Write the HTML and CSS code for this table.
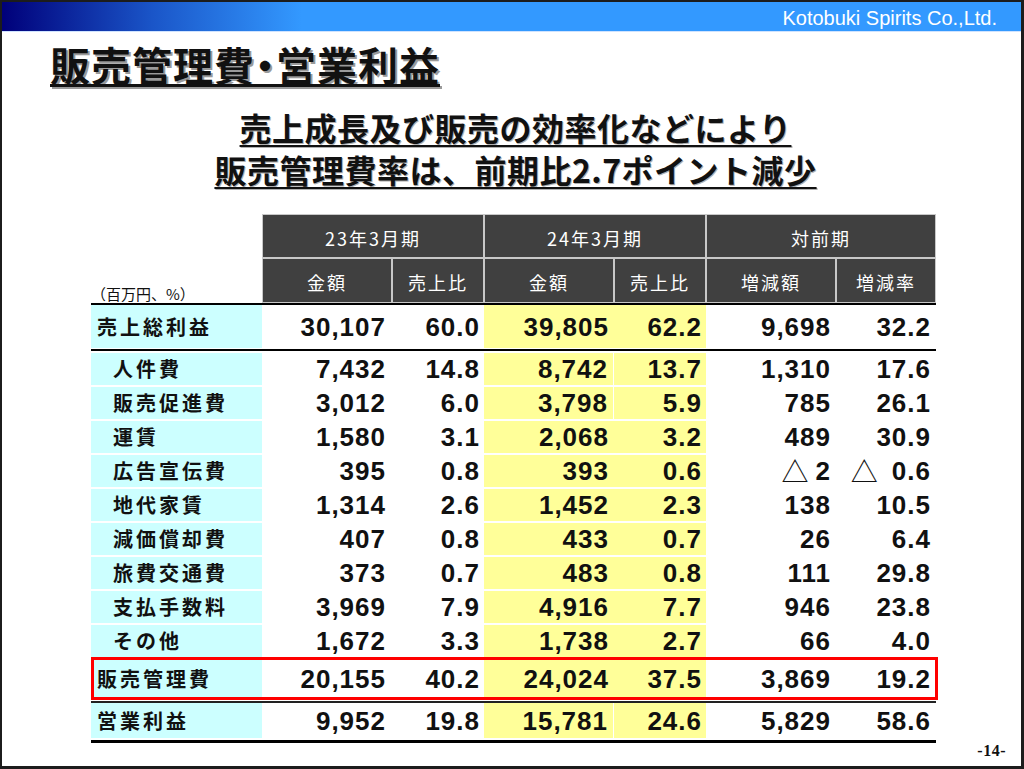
FILE: index.html
```html
<!DOCTYPE html>
<html lang="ja">
<head>
<meta charset="utf-8">
<title>販売管理費・営業利益</title>
<link rel="stylesheet" href="styles.css">
</head>
<body>
<div class="slide">
  <header class="band"><span class="company">Kotobuki Spirits Co.,Ltd.</span></header>
  <h1 class="title">販売管理費<span class="dot">・</span>営業利益</h1>
  <div class="lead">
    <p class="lead-line">売上成長及び販売の効率化などにより</p>
    <p class="lead-line">販売管理費率は、前期比2.7ポイント減少</p>
  </div>
  <div class="table">
    <div class="thead">
      <div class="hblank"></div>
      <div class="hg">23年3月期</div>
      <div class="hg">24年3月期</div>
      <div class="hg">対前期</div>
      <div class="unit">（百万円、%）</div>
      <div class="hc">金額</div>
      <div class="hc">売上比</div>
      <div class="hc">金額</div>
      <div class="hc">売上比</div>
      <div class="hc">増減額</div>
      <div class="hc">増減率</div>
    </div>
    <div class="row gross">
      <div class="lbl cy">売上総利益</div>
      <div class="num">30,107</div><div class="num">60.0</div>
      <div class="num ye">39,805</div><div class="num ye">62.2</div>
      <div class="num">9,698</div><div class="num">32.2</div>
    </div>
    <div class="row detail split">
      <div class="lbl sub cy">人件費</div>
      <div class="num">7,432</div><div class="num">14.8</div>
      <div class="num ye">8,742</div><div class="num ye">13.7</div>
      <div class="num">1,310</div><div class="num">17.6</div>
    </div>
    <div class="row detail split">
      <div class="lbl sub cy">販売促進費</div>
      <div class="num">3,012</div><div class="num">6.0</div>
      <div class="num ye">3,798</div><div class="num ye">5.9</div>
      <div class="num">785</div><div class="num">26.1</div>
    </div>
    <div class="row detail">
      <div class="lbl sub cy">運賃</div>
      <div class="num">1,580</div><div class="num">3.1</div>
      <div class="num ye">2,068</div><div class="num ye">3.2</div>
      <div class="num">489</div><div class="num">30.9</div>
    </div>
    <div class="row detail">
      <div class="lbl sub cy">広告宣伝費</div>
      <div class="num">395</div><div class="num">0.8</div>
      <div class="num ye">393</div><div class="num ye">0.6</div>
      <div class="num"><span class="tri">△</span><span>2</span></div><div class="num"><span class="tri wide">△</span><span>0.6</span></div>
    </div>
    <div class="row detail">
      <div class="lbl sub cy">地代家賃</div>
      <div class="num">1,314</div><div class="num">2.6</div>
      <div class="num ye">1,452</div><div class="num ye">2.3</div>
      <div class="num">138</div><div class="num">10.5</div>
    </div>
    <div class="row detail">
      <div class="lbl sub cy">減価償却費</div>
      <div class="num">407</div><div class="num">0.8</div>
      <div class="num ye">433</div><div class="num ye">0.7</div>
      <div class="num">26</div><div class="num">6.4</div>
    </div>
    <div class="row detail">
      <div class="lbl sub cy">旅費交通費</div>
      <div class="num">373</div><div class="num">0.7</div>
      <div class="num ye">483</div><div class="num ye">0.8</div>
      <div class="num">111</div><div class="num">29.8</div>
    </div>
    <div class="row detail">
      <div class="lbl sub cy">支払手数料</div>
      <div class="num">3,969</div><div class="num">7.9</div>
      <div class="num ye">4,916</div><div class="num ye">7.7</div>
      <div class="num">946</div><div class="num">23.8</div>
    </div>
    <div class="row detail">
      <div class="lbl sub cy">その他</div>
      <div class="num">1,672</div><div class="num">3.3</div>
      <div class="num ye">1,738</div><div class="num ye">2.7</div>
      <div class="num">66</div><div class="num">4.0</div>
    </div>
    <div class="row total">
      <div class="lbl cy">販売管理費</div>
      <div class="num">20,155</div><div class="num">40.2</div>
      <div class="num ye">24,024</div><div class="num ye">37.5</div>
      <div class="num">3,869</div><div class="num">19.2</div>
    </div>
    <div class="row op split">
      <div class="lbl cy">営業利益</div>
      <div class="num">9,952</div><div class="num">19.8</div>
      <div class="num ye">15,781</div><div class="num ye">24.6</div>
      <div class="num">5,829</div><div class="num">58.6</div>
    </div>
  </div>
  <footer class="page-no">-14-</footer>
</div>
</body>
</html>
```
FILE: styles.css
```css
html, body {
  margin: 0;
  padding: 0;
  background: #ffffff;
}

.slide {
  width: 1024px;
  height: 769px;
  box-sizing: border-box;
  border-top: 2px solid #1c1c1c;
  border-left: 2px solid #1c1c1c;
  border-right: 3px solid #1c1c1c;
  border-bottom: 3px solid #1c1c1c;
  overflow: hidden;
  font-family: "Noto Sans CJK JP", sans-serif;
  color: #111;
}

.band {
  height: 29px;
  border-bottom: 1px solid #cfe3ff;
  background: linear-gradient(to right, #00007a 0, #1a55c8 150px, #3399ff 300px, #3399ff 100%);
  display: flex;
  justify-content: flex-end;
  align-items: center;
  padding-right: 24px;
}

.company {
  font-family: "Liberation Sans Narrow", "Liberation Sans", sans-serif;
  font-size: 20px;
  color: #ffffff;
  line-height: 1;
  padding-top: 2px;
}

.title {
  margin: 12px 0 0 48px;
  font-family: "Noto Sans CJK JP", sans-serif;
  font-weight: 700;
  font-size: 40px;
  line-height: 40px;
  letter-spacing: 1px;
  text-decoration: underline;
  text-decoration-thickness: 3px;
  text-underline-offset: 3px;
  text-shadow: 2px 2px 0 #9a9a9a;
}

.dot {
  font-feature-settings: "palt";
}

.lead {
  margin-top: 22px;
  padding-left: 8px;
  text-align: center;
}

.lead-line {
  margin: 0;
  font-family: "Noto Sans CJK JP", sans-serif;
  font-weight: 700;
  font-size: 32px;
  line-height: 42px;
  letter-spacing: 0.5px;
  text-decoration: underline;
  text-decoration-thickness: 2px;
  text-underline-offset: 4px;
  text-shadow: 1px 1px 0 #b0b0b0;
}

.table {
  margin: 24px 0 0 89px;
  width: 845px;
  --cols: 171px 130px 92px 130px 92px 130px 100px;
}

.thead {
  display: grid;
  grid-template-columns: var(--cols);
  grid-template-rows: 44px 45px;
}

.hg, .hc {
  background: #404040;
  border: 1px solid #c8c8c8;
  color: #ffffff;
  font-size: 18px;
  letter-spacing: 2px;
  display: flex;
  align-items: center;
  justify-content: center;
  padding-top: 3px;
  box-sizing: border-box;
}

.hg {
  grid-column: span 2;
}

.unit {
  align-self: end;
  font-size: 15px;
  line-height: 1;
  padding: 0 0 2px 0;
}

.row {
  display: grid;
  grid-template-columns: var(--cols);
  grid-template-rows: 100%;
}

.row > div {
  display: flex;
  align-items: center;
  box-sizing: border-box;
  min-height: 0;
  overflow: visible;
}

.lbl {
  font-family: "Noto Sans CJK JP", sans-serif;
  font-weight: 700;
  font-size: 20px;
  line-height: 24px;
  letter-spacing: 3px;
  padding-left: 6px;
}

.lbl.sub {
  padding-left: 22px;
}

.num {
  justify-content: flex-end;
  font-family: "Liberation Sans", "Noto Sans CJK JP", sans-serif;
  font-weight: 700;
  font-size: 26px;
  line-height: 28px;
  letter-spacing: 1px;
}

.row > .num:nth-child(2) { padding-right: 6px; }
.row > .num:nth-child(3) { padding-right: 4px; }
.row > .num:nth-child(4) { padding-right: 5px; }
.row > .num:nth-child(5) { padding-right: 4px; }
.row > .num:nth-child(6) { padding-right: 5px; }
.row > .num:nth-child(7) { padding-right: 5px; }

.tri {
  font-family: "Noto Sans CJK JP", sans-serif;
  font-weight: 400;
  font-size: 27px;
  line-height: 28px;
  margin-right: 6px;
}

.tri.wide {
  margin-right: 13px;
}

.cy { background: #ccffff; }
.ye { background: #ffff99; }

.gross {
  height: 44px;
  border-top: 2px solid #000;
  border-bottom: 2px solid #000;
}

.gross > div {
  border-bottom: 1px solid #fff;
}

.detail {
  height: 34px;
}

.detail > div {
  border-top: 2px solid #fff;
}

.split > .num:nth-child(4) {
  border-right: 1px solid #fff;
}

.total {
  height: 43px;
  padding: 3px 0 2px;
  box-sizing: border-box;
  outline: 3px solid #ff0000;
  outline-offset: -3px;
  margin-right: -2px;
}

.op {
  margin-top: 1px;
  height: 42px;
  box-sizing: border-box;
  border-top: 2px solid #222;
  border-bottom: 3px solid #000;
}

.op > div {
  border-bottom: 2px solid #fff;
}

.page-no {
  text-align: right;
  padding-right: 15px;
  margin-top: -1px;
  font-family: "Liberation Serif", serif;
  font-weight: 700;
  font-size: 16px;
  letter-spacing: 0.5px;
}
```
